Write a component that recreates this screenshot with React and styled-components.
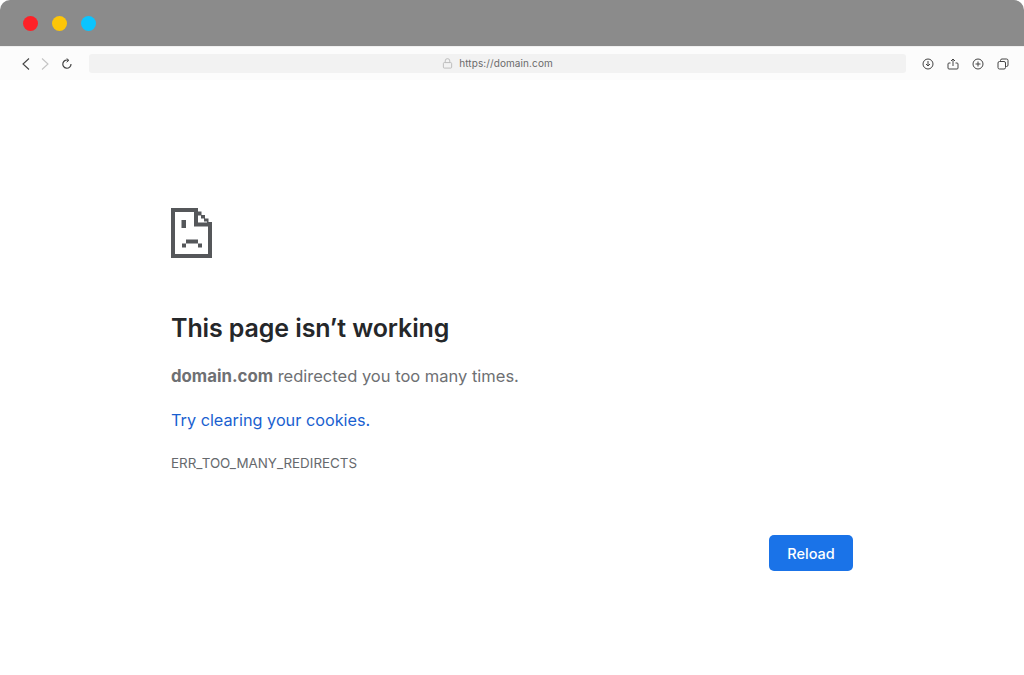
import React from "react";
import styled, { createGlobalStyle } from "styled-components";

const Global = createGlobalStyle`
  html, body { margin: 0; padding: 0; background: #fff; }
  body { font-family: Inter, "Liberation Sans", sans-serif; overflow: hidden; }
`;
const Page = styled.div`
  width: 1024px;
  height: 675px;
  background: #fff;
  display: flex;
  flex-direction: column;
`;
const TitleBar = styled.div`
  height: 46px;
  background: #8b8b8b;
  border-radius: 10px 10px 0 0;
  display: flex;
  align-items: center;
  gap: 14px;
  padding: 0 0 0 23px;
  box-sizing: border-box;
`;
const Dot = styled.span`
  width: 15px;
  height: 15px;
  border-radius: 50%;
  background: ${p => p.$color};
`;
const Toolbar = styled.div`
  height: 34px;
  background: #fcfcfc;
  border-top: 1px solid #f0f0f0;
  box-sizing: border-box;
  display: flex;
  align-items: center;
  padding: 0 15px 0 19px;
`;
const NavGroup = styled.div`
  display: flex;
  align-items: center;
  gap: 5px;
  width: 70px;
`;
const AddressBar = styled.div`
  width: 817px;
  height: 19px;
  padding-bottom: 1px;
  box-sizing: border-box;
  border-radius: 3px;
  background: #f2f2f2;
  display: flex;
  align-items: center;
  justify-content: center;
  gap: 6px;
  color: #6b6b6b;
  font-size: 10px;
  letter-spacing: 0.1px;
`;
const ActionGroup = styled.div`
  display: flex;
  align-items: center;
  gap: 13px;
  margin-left: 16px;
`;
const Icon = styled.svg`
  width: ${p => p.$size || 12}px;
  height: ${p => p.$size || 12}px;
  fill: none;
  stroke: ${p => p.$color || "#444"};
  stroke-width: 1;
  flex: none;
  margin-left: ${p => p.$offset || 0}px;
`;
const Content = styled.main`
  flex: 1;
  display: flex;
  flex-direction: column;
  align-items: flex-start;
  padding: 128px 171px 0;
`;
const SadFile = styled.svg`
  width: 42px;
  height: 50px;
  display: block;
  fill: #55575a;
`;
const Title = styled.h1`
  margin: 55px 0 0;
  font-size: 25px;
  line-height: 30px;
  font-weight: 600;
  color: #25272a;
  letter-spacing: -0.11px;
`;
const Message = styled.p`
  margin: 21px 0 0;
  font-size: 16.5px;
  line-height: 24px;
  color: #6e7073;
`;
const Strong = styled.strong`
  font-weight: 700;
  font-size: 16.8px;
`;
const Tip = styled.a`
  margin-top: 20px;
  font-size: 16.25px;
  line-height: 24px;
  color: #1a5fd0;
`;
const Code = styled.div`
  margin-top: 23px;
  font-size: 13.4px;
  line-height: 16px;
  color: #66696d;
`;
const Actions = styled.div`
  align-self: stretch;
  display: flex;
  justify-content: flex-end;
  margin-top: 64px;
`;
const Reload = styled.button`
  width: 84px;
  height: 36px;
  border: 0;
  border-radius: 5px;
  background: #1a73e8;
  color: #fff;
  font: 500 14.5px Inter, sans-serif;
`;

export default function App() {
  return (
    <Page>
      <Global />
      <TitleBar>
        <Dot $color="#fe2127" />
        <Dot $color="#fdc608" />
        <Dot $color="#0bc4fe" />
      </TitleBar>
      <Toolbar>
        <NavGroup>
          <Icon viewBox="0 0 14 14" $size={14}><path d="M10 1.5 4 7l6 5.5" strokeWidth="1.1" /></Icon>
          <Icon viewBox="0 0 14 14" $size={14} $color="#c4c4c4"><path d="M4 1.5 10 7l-6 5.5" strokeWidth="1.1" /></Icon>
          <Icon viewBox="0 0 12 12" $size={12} $offset={4}>
            <path d="M7.6 2.4A4.1 4.1 0 1 0 10 6" strokeWidth="1.2" />
            <path d="M5.6.4 7.8 2.4 5.6 4.2" />
          </Icon>
        </NavGroup>
        <AddressBar>
          <Icon viewBox="0 0 12 12" $size={11} $color="#b9b9b9">
            <rect x="1.5" y="5" width="9" height="6" rx="1" />
            <path d="M3.5 5V3.2a2.5 2.5 0 0 1 5 0V5" />
          </Icon>
          https://domain.com
        </AddressBar>
        <ActionGroup>
          <Icon viewBox="0 0 12 12">
            <circle cx="6" cy="6" r="5" />
            <path d="M6 3v5M4 6l2 2 2-2" />
          </Icon>
          <Icon viewBox="0 0 12 12">
            <path d="M3.5 5H2A1 1 0 0 0 1 6v4a1 1 0 0 0 1 1h8a1 1 0 0 0 1-1V6a1 1 0 0 0-1-1H8.5M6 8V1M4 3l2-2 2 2" />
          </Icon>
          <Icon viewBox="0 0 12 12">
            <circle cx="6" cy="6" r="5" />
            <path d="M6 3.5v5M3.5 6h5" />
          </Icon>
          <Icon viewBox="0 0 12 12">
            <rect x="1" y="3.5" width="7.5" height="7.5" rx="1.5" />
            <path d="M3.5 3.5v-1A1.5 1.5 0 0 1 5 1h4.500A1.500 1.500 0 0 1 11 2.500V7a1.500 1.500 0 0 1-1.500 1.500h-1" />
          </Icon>
        </ActionGroup>
      </Toolbar>
      <Content>
        <SadFile viewBox="0 0 42 50">
          <path fillRule="evenodd" d="M0 0H27V3.500H30.500V7H34V10.500H37.500V14H41V50H0ZM4 4V46H37V18.500H23V4ZM27 5.500V14.500H36V13.500H33V10.500H30V7.500H27Z" />
          <rect x="10.500" y="12" width="4.500" height="8" />
          <rect x="15" y="31.500" width="12" height="4" />
          <rect x="11" y="35.500" width="4" height="4" />
          <rect x="27" y="35.500" width="4" height="4" />
        </SadFile>
        <Title>This page isn’t working</Title>
        <Message><Strong>domain.com</Strong> redirected you too many times.</Message>
        <Tip>Try clearing your cookies.</Tip>
        <Code>ERR_TOO_MANY_REDIRECTS</Code>
        <Actions><Reload>Reload</Reload></Actions>
      </Content>
    </Page>
  );
}
